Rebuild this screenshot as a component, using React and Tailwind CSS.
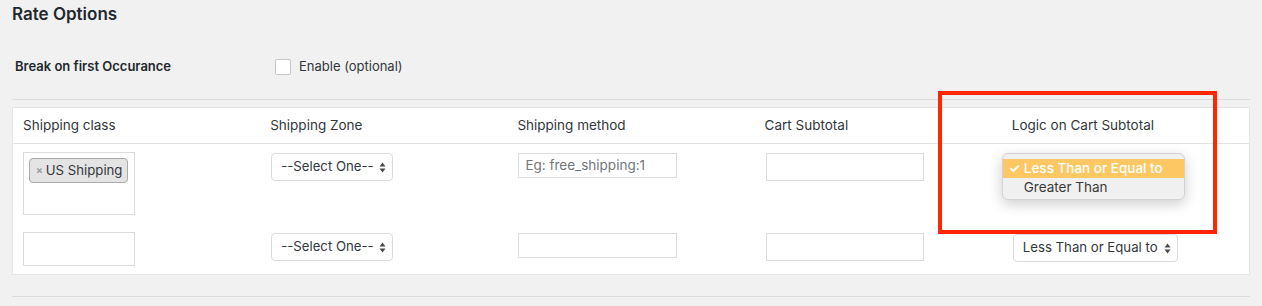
import React from "react";

function Arrows() {
  return (
    <svg width="7" height="11" viewBox="0 0 7 11" className="shrink-0 ml-[3px]">
      <path d="M3.5 0.5 L6.5 4.5 L0.5 4.5 Z" fill="#4a4a4a" />
      <path d="M3.5 10.5 L6.5 6.5 L0.5 6.5 Z" fill="#4a4a4a" />
    </svg>
  );
}

function FakeSelect({ label, width, focused }) {
  return (
    <div
      className={`flex items-center justify-between h-[28px] pl-[9px] pr-[6px] bg-white rounded-[4px] border text-[13.2px] ${
        focused ? "border-[#5b9dd9]" : "border-[#dcdcdc]"
      } ${width}`}
    >
      <span className="whitespace-nowrap">{label}</span>
      <Arrows />
    </div>
  );
}

const HEADERS = [
  "Shipping class",
  "Shipping Zone",
  "Shipping method",
  "Cart Subtotal",
  "Logic on Cart Subtotal",
];

export default function App() {
  return (
    <div className="relative min-h-[306px] bg-[#f1f1f1] px-3 text-[13.5px] text-[#32373c] font-['Inter',sans-serif]">
      <h2 className="pt-[3px] text-[17px] leading-[22px] font-semibold text-[#23282d]">
        Rate Options
      </h2>

      <div className="mt-[34px] flex items-center h-4">
        <span className="w-[263px] pl-[3px] text-[13px] font-semibold text-[#23282d]">
          Break on first Occurance
        </span>
        <span className="w-4 h-4 bg-white border border-[#c6c6c6] rounded-[2px]" />
        <span className="ml-2 text-[13px]">Enable (optional)</span>
      </div>

      <div className="mt-[24px] h-px bg-[#dcdcdc]" />

      <div className="mt-[7px] bg-white border border-[#e5e5e5]">
        <div className="grid grid-cols-5 h-[36px] items-center border-b border-[#e1e1e1]">
          {HEADERS.map((h) => (
            <div key={h} className="px-[10px]">
              {h}
            </div>
          ))}
        </div>

        {/* row 1 */}
        <div className="grid grid-cols-5 pt-[8px] pb-[8px]">
          <div className="px-[10px]">
            <div className="w-[112px] h-[63px] border border-[#dcdcdc] pt-[5px] pl-[5px]">
              <span className="inline-flex items-center whitespace-nowrap h-[25px] w-[99px] pl-[6px] bg-[#e4e4e4] border border-[#aaa] rounded-[4px] text-[13.2px]">
                <span className="text-[10px] text-[#999] mr-[3px] font-bold">×</span>
                US Shipping
              </span>
            </div>
          </div>
          <div className="px-[10px] pt-px">
            <div className="ml-px">
              <FakeSelect label="--Select One--" width="w-[122px]" />
            </div>
          </div>
          <div className="px-[10px] pt-px">
            <div className="ml-px w-[159px] h-[25px] border border-[#dcdcdc] flex items-center px-[6px] text-[#72777c]">
              Eg: free_shipping:1
            </div>
          </div>
          <div className="px-[10px] pt-px">
            <div className="ml-px w-[158px] h-[28px] border border-[#dcdcdc]" />
          </div>
          <div className="px-[10px] pt-px">
            <div className="relative ml-[2px]">
              {/* open select: the menu covers it */}
              <FakeSelect label="" width="w-[163px]" focused />
              <div className="absolute left-[-12px] top-0 w-[183px] h-[47px] pt-[5px] rounded-[6px] bg-[#f0f0f0] border border-[#d2d2d2] shadow-[0_4px_14px_rgba(0,0,0,0.2)]">
                <div className="flex items-center h-[19px] bg-[#fdc864] text-white font-medium">
                  <span className="w-[21px] pl-[6px] text-[13px] font-bold">✓</span>
                  Less Than or Equal to
                </div>
                <div className="flex items-center h-[19px] pl-[21px] text-[#3a3a3a]">
                  Greater Than
                </div>
              </div>
            </div>
          </div>
        </div>

        {/* row 2 */}
        <div className="grid grid-cols-5 pt-[8px] pb-[8px]">
          <div className="px-[10px] pt-px">
            <div className="w-[112px] h-[34px] border border-[#dcdcdc]" />
          </div>
          <div className="px-[10px] pt-[2px]">
            <div className="ml-px">
              <FakeSelect label="--Select One--" width="w-[122px]" />
            </div>
          </div>
          <div className="px-[10px] pt-[2px]">
            <div className="ml-px w-[159px] h-[25px] border border-[#dcdcdc]" />
          </div>
          <div className="px-[10px] pt-[2px]">
            <div className="ml-px w-[158px] h-[28px] border border-[#dcdcdc]" />
          </div>
          <div className="px-[10px] pt-[3px]">
            <div className="ml-px">
              <FakeSelect label="Less Than or Equal to" width="w-[165px]" />
            </div>
          </div>
        </div>
      </div>

      <div className="mt-[21px] h-px bg-[#dcdcdc]" />

      {/* annotation box */}
      <div className="absolute left-[938px] top-[91px] w-[279px] h-[143px] border-4 border-[#ff2600]" />
    </div>
  );
}
